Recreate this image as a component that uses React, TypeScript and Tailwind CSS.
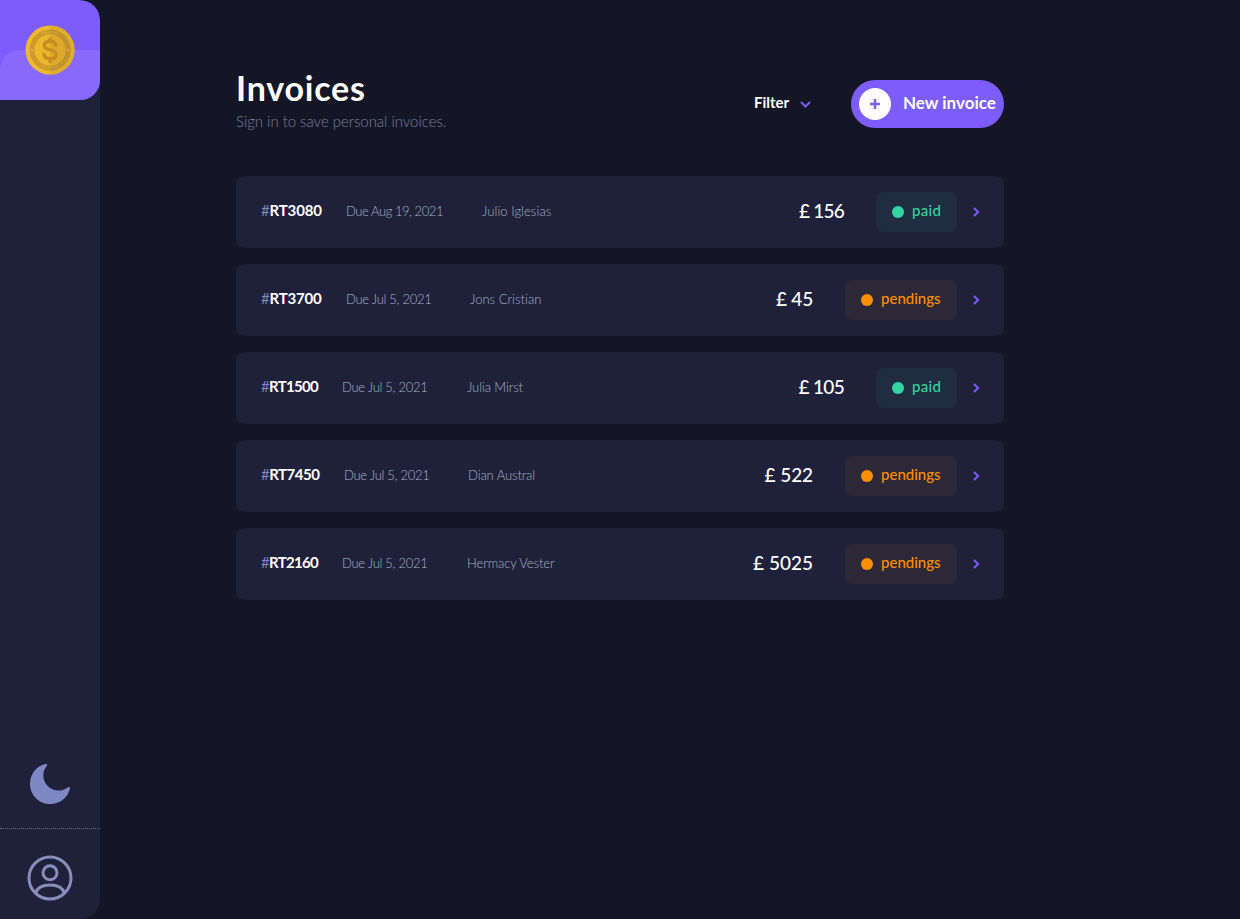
import React from "react";

type Invoice = {
  id: string;
  idClass: string;
  due: string;
  dueClass: string;
  name: string;
  nameClass: string;
  amount: string;
  amountClass: string;
  paid: boolean;
};

const invoices: Invoice[] = [
  { id: "RT3080", idClass: "w-[61px] tracking-[-0.15px]", due: "Due Aug 19, 2021", dueClass: "w-[96px] tracking-[-0.44px]", name: "Julio Iglesias", nameClass: "tracking-[0.05px]", amount: "156", amountClass: "tracking-[-0.8px]", paid: true },
  { id: "RT3700", idClass: "w-[61px] tracking-[-0.2px]", due: "Due Jul 5, 2021", dueClass: "w-[84px] tracking-[-0.28px]", name: "Jons Cristian", nameClass: "tracking-[0.02px]", amount: "45", amountClass: "tracking-[-0.2px]", paid: false },
  { id: "RT1500", idClass: "w-[57px] tracking-[-0.7px]", due: "Due Jul 5, 2021", dueClass: "w-[85px] tracking-[-0.28px]", name: "Julia Mirst", nameClass: "tracking-[-0.1px]", amount: "105", amountClass: "tracking-[-0.7px]", paid: true },
  { id: "RT7450", idClass: "w-[59px] tracking-[-0.5px]", due: "Due Jul 5, 2021", dueClass: "w-[84px] tracking-[-0.28px]", name: "Dian Austral", nameClass: "tracking-[-0.1px]", amount: "522", amountClass: "tracking-[-0.1px]", paid: false },
  { id: "RT2160", idClass: "w-[57px] tracking-[-0.7px]", due: "Due Jul 5, 2021", dueClass: "w-[85px] tracking-[-0.28px]", name: "Hermacy Vester", nameClass: "tracking-[-0.1px]", amount: "5025", amountClass: "tracking-[0px]", paid: false },
];

function Coin() {
  return (
    <svg width="50" height="50" viewBox="0 0 50 50">
      <circle cx="25" cy="25" r="24.5" fill="#edb92e" />
      <path d="M25 .5a24.5 24.5 0 0 1 0 49z" fill="#deac2e" />
      <circle cx="25" cy="25" r="20.5" fill="#cb9c2c" />
      <path d="M25 4.500a20.500 20.500 0 0 1 0 41z" fill="#c0942d" />
      <circle cx="25" cy="25" r="15.500" fill="#ecb62d" />
      <path d="M25 9.500a15.500 15.500 0 0 1 0 31z" fill="#dda92d" />
      <path d="M16.500 9Q25 5.500 33.500 9M16.500 41Q25 44.500 33.500 41" fill="none" stroke="#dcae43" strokeWidth="2" strokeDasharray="1.500 .7" opacity=".6" />
      <circle cx="7" cy="25" r="1.100" fill="#edb62e" />
      <circle cx="43" cy="25" r="1.100" fill="#edb62e" />
      <path d="M30.800 20.500c-.4-2.700-2.600-4.200-5.800-4.200-3.400 0-5.700 1.600-5.700 4.200 0 6 11.900 2.900 11.900 8.900 0 2.700-2.400 4.300-6 4.300-3.500 0-5.800-1.600-6.300-4.300M25 14v2.500M25 33.500v3" fill="none" stroke="#c38e23" strokeWidth="3.400" strokeLinecap="round" />
    </svg>
  );
}

function Sidebar() {
  return (
    <aside className="flex h-[919px] w-[100px] shrink-0 flex-col justify-between overflow-hidden rounded-r-[20px] bg-[#1f213a]">
      <div className="relative flex h-[100px] items-center justify-center overflow-hidden rounded-r-[20px] bg-[#7c5dfa]">
        <div className="absolute inset-x-0 bottom-0 h-[50px] rounded-tl-[20px] bg-[#8769fd]" />
        <div className="relative">
          <Coin />
        </div>
      </div>
      <div>
        <div className="flex justify-center pb-6">
          <svg width="40" height="40" viewBox="0 0 40 40">
            <path
              d="M16.700 2.100C14.300 5 13.300 8 13.300 11.200c0 8.600 6.700 15.300 15.200 15.300 3.500 0 6.500-1.100 9.100-3.100 1.300-1 2.700-.2 2.300 1.400C37.500 33.900 30.200 40 20.400 40 9.100 40 0 31 0 19.900 0 10.300 6.400 2.100 15.500.1c1.500-.3 2.100.8 1.200 2Z"
              fill="#7e88c3"
            />
          </svg>
        </div>
        <div className="flex h-[91px] items-start justify-center border-t border-dotted border-[#666a86] pt-[26px]">
          <svg width="46" height="46" viewBox="0 0 46 46" fill="none" stroke="#888eb9" strokeWidth="3">
            <circle cx="23" cy="23" r="21" />
            <circle cx="23" cy="17.800" r="7" />
            <path d="M8.500 38C10.200 33 15.500 30 23 30s12.800 3 14.500 8" />
          </svg>
        </div>
      </div>
    </aside>
  );
}

function Row({ invoice }: { invoice: Invoice }) {
  return (
    <li className="flex h-[72px] items-center justify-between rounded-lg bg-[#1f213a] pr-6 pl-[25px] whitespace-nowrap">
      <div className="flex items-center gap-6 pb-1">
        <span className={"text-[15px] leading-5 font-bold text-white " + invoice.idClass}>
          <span className="font-normal text-[#7e88c3]">#</span>
          {invoice.id}
        </span>
        <span className={"mr-4 pt-0.5 text-[13px] leading-5 font-light text-[#a5b2c6] " + invoice.dueClass}>{invoice.due}</span>
        <span className={"pt-0.5 text-[13px] leading-5 font-light text-[#a5b2c6] " + invoice.nameClass}>{invoice.name}</span>
      </div>
      <div className="flex items-center">
        <span className={"mr-8 pb-0.5 text-[19px] leading-6 font-medium text-white " + invoice.amountClass}>£ {invoice.amount}</span>
        <span
          className={
            "mr-4 flex h-10 items-center gap-2 rounded-lg px-4 text-[15px] " +
            (invoice.paid ? "w-[81px] bg-[#33d69f]/[0.06] text-[#33d69f]" : "w-[112px] bg-[#ff8f00]/[0.06] text-[#ff8f00]")
          }
        >
          <span className={"size-3 shrink-0 rounded-full " + (invoice.paid ? "bg-[#33d69f]" : "bg-[#ff8f00]")} />
          <span className={"pb-1 leading-5 font-medium " + (invoice.paid ? "tracking-[0.3px]" : "tracking-[0px]")}>{invoice.paid ? "paid" : "pendings"}</span>
        </span>
        <svg width="7" height="10" viewBox="0 0 7 10" fill="none" stroke="#7c5dfa" strokeWidth="2">
          <path d="m1 1 4 4-4 4" />
        </svg>
      </div>
    </li>
  );
}

export default function App() {
  return (
    <div className="flex h-[919px] w-full overflow-hidden bg-[#141625] font-['Lato','Open_Sans',sans-serif]">
      <Sidebar />
      <main className="ml-[136px] w-[768px] pt-[72px]">
        <header className="flex h-16 items-center justify-between whitespace-nowrap">
          <div className="pb-1">
            <h1 className="text-[34px] leading-9 font-bold tracking-[0.8px] text-white">Invoices</h1>
            <p className="pt-0.5 text-[15px] leading-[26px] font-light tracking-[-0.03px] text-[#7a7f9e]">Sign in to save personal invoices.</p>
          </div>
          <div className="flex items-center">
            <button className="mr-10 flex items-center gap-[11px] text-[15px] font-bold text-white">
              <span className="w-[35px] pb-1 leading-5">Filter</span>
              <svg width="11" height="7" viewBox="0 0 11 7" fill="none" stroke="#7c5dfa" strokeWidth="2">
                <path d="m1 1 4.500 4.500L10 1" />
              </svg>
            </button>
            <button className="flex h-12 w-[153px] items-center gap-3 rounded-full bg-[#7c5dfa] p-2 text-[17px] font-bold text-white">
              <span className="flex size-8 shrink-0 items-center justify-center rounded-full bg-white">
                <svg width="10" height="10" viewBox="0 0 10 10" stroke="#7c5dfa" strokeWidth="2.400">
                  <path d="M5 0v10M0 5h10" />
                </svg>
              </span>
              <span className="pb-0.5">New invoice</span>
            </button>
          </div>
        </header>
        <ul className="mt-10 flex flex-col gap-4">
          {invoices.map((invoice) => (
            <Row key={invoice.id} invoice={invoice} />
          ))}
        </ul>
      </main>
    </div>
  );
}
